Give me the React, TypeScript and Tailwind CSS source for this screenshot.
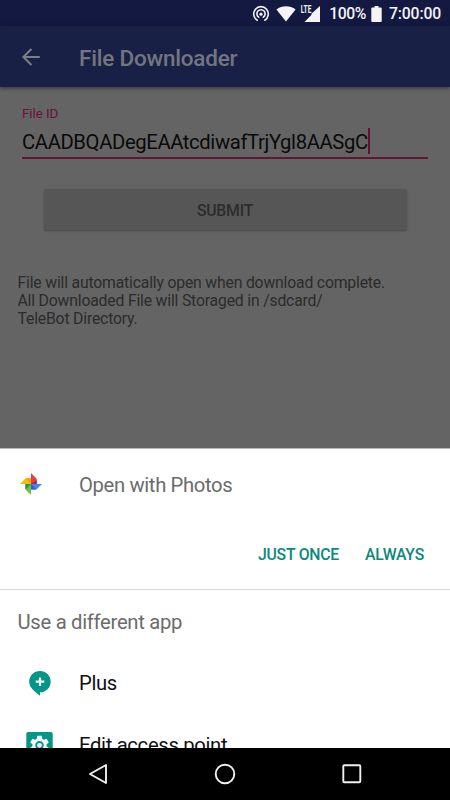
import React from 'react';

const StatusBar = () => (
  <header className="flex h-[26px] shrink-0 items-center justify-end bg-[#141941] pt-[1px] pr-[9px] text-[#f4f4f6]">
    <svg className="mr-[6px] h-[18px] w-[18px]" viewBox="0 0 18 18" fill="none" stroke="currentColor" strokeWidth="1.6" strokeLinecap="round">
      <path d="M5.2 15.2a7.3 7.3 0 1 1 7.6 0" />
      <path d="M6.7 12.2a4.1 4.1 0 1 1 4.6 0" />
      <circle cx="9" cy="9.2" r="1.6" fill="currentColor" stroke="none" />
    </svg>
    <svg className="mr-[4px] h-[16px] w-[20px]" viewBox="0 0 20 16" fill="currentColor">
      <path d="M0.4 3.6C6 -0.8 14 -0.8 19.6 3.6L10 15.6z" />
    </svg>
    <svg className="mr-[8px] h-[18px] w-[21px]" viewBox="0 0 21 18" fill="currentColor">
      <path d="M20 1v16H4.5l6.9-7V8.8L20 1z" />
      <text x="0.8" y="8.3" fontFamily="Roboto" fontSize="10" fontWeight="700" textLength="10.5" lengthAdjust="spacingAndGlyphs">LTE</text>
    </svg>
    <span className="pt-[1px] text-[15.75px] leading-[26px] font-medium tracking-[-0.4px]">100%</span>
    <svg className="ml-[5px] mr-[7px] h-[16px] w-[11px]" viewBox="0 0 11 16" fill="currentColor">
      <path d="M3.5 0h4v1.6h2.3q.9 0 .9.9v12.6q0 .9-.9.9H1.2q-.9 0-.9-.9V2.5q0-.9.9-.9h2.3z" />
    </svg>
    <span className="pt-[1px] text-[15.75px] leading-[26px] font-medium tracking-[-0.15px]">7:00:00</span>
  </header>
);

const PhotosIcon = () => (
  <svg className="mb-[2px] h-[22px] w-[22px]" viewBox="0 0 22 22">
    <path d="M11 0l5.7 5.7V11H11z" fill="#dc4437" />
    <path d="M11 11h5.7V7.2z" fill="#b31f4b" />
    <path d="M0 10.9l5.6-5.6H11v5.6z" fill="#fbbc05" />
    <path d="M5.6 5.3H11v5.6z" fill="#f79c1d" />
    <path d="M11 22l-5.6-5.6V11H11z" fill="#76bb3d" />
    <path d="M5.4 11H11l-5.6 5.4z" fill="#0f9d58" />
    <path d="M22 11l-5.6 5.6H11V11z" fill="#4285f4" />
    <path d="M11 11l5.4 5.6H11z" fill="#2a62d8" />
  </svg>
);

const PlusIcon = () => (
  <svg className="h-[25px] w-[22px]" viewBox="0 0 22 25">
    <path d="M11 0a10.6 10.6 0 0 1 0 21.3v3.4C8.8 22.7 5.6 20.9 3.5 18.2A10.6 10.6 0 0 1 11 0z" fill="#009688" />
    <path d="M11 6.4v8.6M6.7 10.7h8.6" stroke="#f5f5f5" strokeWidth="2.2" />
  </svg>
);

const SettingsIcon = () => (
  <svg className="h-[27px] w-[27px]" viewBox="0 0 27 27">
    <rect x="0.3" width="26.4" height="27" rx="1.8" fill="#009688" />
    <g transform="translate(2.1 1.9) scale(.95)">
      <path
        d="M19.43 12.98c.04-.32.07-.64.07-.98s-.03-.66-.07-.98l2.11-1.65c.19-.15.24-.42.12-.64l-2-3.46c-.12-.22-.39-.3-.61-.22l-2.49 1c-.52-.4-1.08-.73-1.69-.98l-.38-2.65C14.46 2.18 14.25 2 14 2h-4c-.25 0-.46.18-.49.42l-.38 2.65c-.61.25-1.17.59-1.69.98l-2.49-1c-.23-.09-.49 0-.61.22l-2 3.46c-.13.22-.07.49.12.64l2.11 1.65c-.04.32-.07.65-.07.98s.03.66.07.98l-2.11 1.65c-.19.15-.24.42-.12.64l2 3.46c.12.22.39.3.61.22l2.49-1c.52.4 1.08.73 1.69.98l.38 2.65c.03.24.24.42.49.42h4c.25 0 .46-.18.49-.42l.38-2.65c.61-.25 1.17-.59 1.69-.98l2.49 1c.23.09.49 0 .61-.22l2-3.46c.12-.22.07-.49-.12-.64z"
        fill="#f5f5f5"
      />
      <circle cx="12" cy="12" r="3.5" fill="#f5f5f5" stroke="#009688" strokeWidth="1.9" />
    </g>
  </svg>
);

const App = () => {
  const apps = [
    { name: 'Plus', icon: <PlusIcon /> },
    { name: 'Edit access point', icon: <SettingsIcon /> },
  ];

  return (
    <div className="flex h-[800px] w-[450px] flex-col overflow-hidden bg-[#646464] font-[Roboto,sans-serif]">
      <StatusBar />

      <div className="z-10 flex h-[61px] shrink-0 items-center bg-[#192045] pl-[22px] shadow-[0_1px_4px_rgba(0,0,0,0.5)]">
        <svg className="mr-[39px] h-[18px] w-[18px]" viewBox="0 0 18 18" fill="none" stroke="#7c7e88" strokeWidth="2">
          <path d="M9.4 1L1.4 9l8 8M1.4 9H17.8" />
        </svg>
        <h1 className="pt-[3px] text-[22.5px] leading-[28px] font-medium tracking-[-0.22px] text-[#737580]">File Downloader</h1>
      </div>

      <main className="flex h-[361px] shrink-0 flex-col overflow-hidden">
        <div className="mx-[22px] flex flex-col">
          <label className="mt-[18px] text-[13.5px] leading-[16px] tracking-[-0.1px] text-[#6c1039]">File ID</label>
          <div className="mt-[6px] flex h-[28px] items-center">
            <span className="pt-[1px] text-[20.25px] leading-[26px] tracking-[-0.38px] text-[#0a0a0a]">CAADBQADegEAAtcdiwafTrjYgl8AASgC</span>
            <span className="h-[26px] w-[2px] bg-[#660f33]" />
          </div>
          <div className="mt-[2px] h-[2px] bg-[#661435]" />
        </div>
        <button className="mx-[43.5px] mt-[30px] h-[41px] shrink-0 rounded-[2px] bg-[#565656] pt-[2px] text-[15.75px] font-medium tracking-[-0.2px] text-[#2c2c2c] shadow-[0_1px_2px_rgba(0,0,0,0.3)]">
          SUBMIT
        </button>
        <p className="mt-[44px] ml-[17.5px] text-[15.75px] leading-[18px] tracking-[-0.18px] text-[#2b2b2b]">
          File will automatically open when download complete.
          <br />
          All Downloaded File will Storaged in /sdcard/
          <br />
          TeleBot Directory.
        </p>
      </main>

      <section className="flex h-[300px] shrink-0 flex-col overflow-hidden border-t border-[#bcbcbc] bg-white">
        <div className="flex h-[71px] shrink-0 items-center pl-[20px]">
          <PhotosIcon />
          <span className="ml-[37px] pt-[1px] text-[20.25px] leading-[26px] tracking-[-0.36px] text-[#6b6b6b]">Open with Photos</span>
        </div>
        <div className="flex h-[70px] shrink-0 items-center justify-end gap-[26px] border-b border-[#d6d6d6] pr-[26px] text-[15.75px] font-medium tracking-[-0.2px] text-[#09897b]">
          <button>JUST ONCE</button>
          <button>ALWAYS</button>
        </div>
        <h2 className="flex h-[62px] shrink-0 items-center pt-[2px] pl-[17.5px] text-[20.25px] tracking-[-0.3px] text-[#6b6b6b]">Use a different app</h2>
        <ul className="flex flex-col">
          {apps.map((app) => (
            <li key={app.name} className="flex h-[62px] shrink-0 items-center">
              <div className="flex w-[79px] justify-center">{app.icon}</div>
              <span className="text-[20.25px] leading-[26px] tracking-[-0.33px] text-[#101010]">{app.name}</span>
            </li>
          ))}
        </ul>
      </section>

      <nav className="flex h-[52px] shrink-0 items-center bg-black pl-[88px]">
        <svg className="h-[22px] w-[20px]" viewBox="0 0 20 22" fill="none" stroke="#f0f0f0" strokeWidth="1.9" strokeLinejoin="round">
          <path d="M18 2v18L2 11z" />
        </svg>
        <svg className="ml-[106px] h-[22px] w-[22px]" viewBox="0 0 22 22" fill="none" stroke="#f0f0f0" strokeWidth="1.9">
          <circle cx="11" cy="11" r="9.3" />
        </svg>
        <svg className="ml-[106px] h-[20px] w-[20px]" viewBox="0 0 20 20" fill="none" stroke="#f0f0f0" strokeWidth="1.9">
          <rect x="1.3" y="1.3" width="17" height="17" rx="1" />
        </svg>
      </nav>
    </div>
  );
};

export default App;
